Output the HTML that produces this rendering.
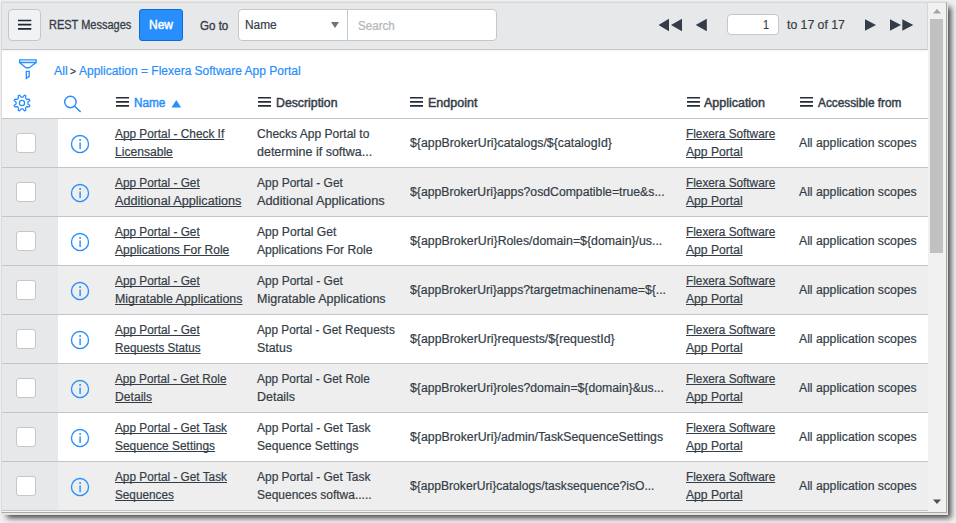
<!DOCTYPE html>
<html><head><meta charset="utf-8"><style>
*{margin:0;padding:0;box-sizing:border-box}
html,body{width:956px;height:523px;overflow:hidden;background:#f0f0f0;position:relative;
font-family:"Liberation Sans",sans-serif;font-size:12px;color:#343d47}
.t{position:absolute;white-space:pre;line-height:18px;transform-origin:0 0;text-decoration-skip-ink:none;-webkit-text-stroke:0.2px currentColor}
.outer{position:absolute;left:1px;top:1px;width:947px;height:514px;background:#e4e4e4;
 box-shadow:4.3px 4.3px 5.7px -1.7px rgba(0,0,0,0.7)}
.win{position:absolute;left:1px;top:2px;width:946px;height:511px;background:#f4f4f4;
 border-left:1px solid #dadada;border-top:1px solid #d6d8da;border-right:1px solid #a8a8a8;border-bottom:1px solid #aaaaaa}
.hdr{position:absolute;left:2px;top:3px;width:926px;height:47px;background:#e6e8ea;border-bottom:1px solid #c3c5c8;border-right:1px solid #d4d7da;box-shadow:0 1px 2px rgba(0,0,0,0.05)}
.hbtn{position:absolute;left:8px;top:9px;width:33px;height:32px;background:#f1f2f3;border:1px solid #c4c7ca;border-radius:4px}
.hbtn i{position:absolute;left:9px;width:14px;height:2px;background:#1e2832}
.newbtn{position:absolute;left:139px;top:9px;width:44px;height:32px;background:#278efc;border:1px solid #0c6cd8;border-radius:3px}
.sel{position:absolute;left:238px;top:9px;width:110px;height:32px;background:#fff;border:1px solid #c4c7ca;border-radius:4px 0 0 4px}
.selarrow{position:absolute;left:331px;top:22px;width:0;height:0;border-left:4px solid transparent;border-right:4px solid transparent;border-top:6px solid #6d747b}
.srch{position:absolute;left:347px;top:9px;width:150px;height:32px;background:#fff;border:1px solid #c4c7ca;border-radius:0 4px 4px 0}
.pg{position:absolute}
.pinp{position:absolute;left:727px;top:14px;width:52px;height:21px;background:#fff;border:1px solid #c4c7ca;border-radius:4px}
.hic{position:absolute;top:97px;width:13px;height:10px}
.hic i{position:absolute;left:0;width:13px;height:1.6px;background:#232c36}
.hline{position:absolute;left:2px;top:118px;width:926px;height:1px;background:#c4c7ca}
.body{position:absolute;left:2px;top:50px;width:926px;height:461px;background:#fff}
.row{position:absolute;left:2px;width:926px;height:48px}
.lcol{position:absolute;left:2px;width:56px;height:48px;background:#e6e8ea}
.rline{position:absolute;left:2px;width:926px;height:1px;background:#c3c6c9}
.cb{position:absolute;left:16px;width:20px;height:20px;background:#fff;border:1px solid #c4c6c9;border-radius:3px}
.info{position:absolute;left:69.6px}
.sb{position:absolute;left:928px;top:3px;width:18px;height:509px;background:#f1f1f1}
.thumb{position:absolute;left:930px;top:19px;width:13px;height:234px;background:#c1c1c1}
.frame{position:absolute;left:1px;top:1px;width:947px;height:513px;border:1px solid #d5d6d8;
 box-shadow:2px 3px 6px 1px rgba(0,0,0,0.45)}
</style></head>
<body>
<div class="outer"></div>
<div class="win"></div>
<div class="body"></div>
<div class="hdr"></div>
<div class="hbtn"></div>
<svg style="position:absolute;left:17px;top:16px" width="16" height="16" viewBox="0 0 16 16"><path d="M1 4.5 H14.3 M1 8.6 H14.3 M1 12.8 H14.3" stroke="#1e2832" stroke-width="1.7"/></svg>
<div class="t" style="transform:scaleX(0.9164);left:48.5px;top:15.600000000000001px;-webkit-text-stroke:0.3px currentColor;">REST Messages</div>
<div class="newbtn"></div>
<div class="t" style="transform:scaleX(0.9993);left:149px;top:16px;color:#fff;-webkit-text-stroke:0.45px #fff;">New</div>
<div class="t" style="transform:scaleX(0.9639);left:200.2px;top:17px;-webkit-text-stroke:0.35px currentColor;">Go to</div>
<div class="sel"></div>
<div class="t" style="transform:scaleX(0.9901);left:244.5px;top:16px;">Name</div>
<div class="selarrow"></div>
<div class="srch"></div>
<div class="t" style="transform:scaleX(0.9676);left:357.6px;top:16.6px;color:#b1b6bb;">Search</div>
<svg class="pg" style="left:656px;top:17px" width="30" height="16" viewBox="0 0 30 16"><path d="M2.5 8 L13 1.8 L13 14.2 Z M15 8 L26 1.8 L26 14.2 Z" fill="#343d47"/></svg>
<svg class="pg" style="left:694px;top:17px" width="16" height="16" viewBox="0 0 16 16"><path d="M1.7 8 L12.8 1.8 L12.8 14.2 Z" fill="#343d47"/></svg>
<div class="pinp"></div>
<div class="t" style="transform:scaleX(0.8972);left:762.7px;top:15.8px;">1</div>
<div class="t" style="transform:scaleX(1.0191);left:787px;top:15.899999999999999px;">to 17 of 17</div>
<svg class="pg" style="left:863px;top:17px" width="16" height="16" viewBox="0 0 16 16"><path d="M13 8 L2 2.2 L2 13.8 Z" fill="#343d47"/></svg>
<svg class="pg" style="left:888px;top:17px" width="30" height="16" viewBox="0 0 30 16"><path d="M13 8 L2 2.2 L2 13.8 Z M25.3 8 L14.3 2.2 L14.3 13.8 Z" fill="#343d47"/></svg>
<svg style="position:absolute;left:10px;top:54px" width="34" height="30" viewBox="0 0 34 30"><path d="M9.6 5.9 H26.1 V8.5 H9.6 Z" fill="none" stroke="#278efc" stroke-width="1.35" stroke-linejoin="miter"/><path d="M9.6 8.5 L15.9 13.7 H19.3 L26.1 8.5" fill="none" stroke="#278efc" stroke-width="1.35" stroke-linejoin="round"/><path d="M16.3 17.4 H19.2 V22.4 L16.3 24.4 Z" fill="none" stroke="#278efc" stroke-width="1.3" stroke-linejoin="miter"/></svg>
<div class="t" style="transform:scaleX(1.0267);left:54px;top:62px;color:#278efc;">All</div>
<div class="t" style="transform:scaleX(0.9771);left:69.8px;top:61.599999999999994px;font-size:10.5px;">&gt;</div>
<div class="t" style="transform:scaleX(0.9991);left:78.6px;top:62px;color:#278efc;">Application = Flexera Software App Portal</div>
<svg style="position:absolute;left:11.5px;top:93.2px" width="22" height="22" viewBox="0 0 22 22"><g fill="none" stroke="#278efc" stroke-width="1.25"><path d="M15.93 10.94 L17.84 12.41 L17.25 13.84 L14.85 13.53 L13.53 14.85 L13.84 17.25 L12.41 17.84 L10.94 15.93 L9.06 15.93 L7.59 17.84 L6.16 17.25 L6.47 14.85 L5.15 13.53 L2.75 13.84 L2.16 12.41 L4.07 10.94 L4.07 9.06 L2.16 7.59 L2.75 6.16 L5.15 6.47 L6.47 5.15 L6.16 2.75 L7.59 2.16 L9.06 4.07 L10.94 4.07 L12.41 2.16 L13.84 2.75 L13.53 5.15 L14.85 6.47 L17.25 6.16 L17.84 7.59 L15.93 9.06 Z" stroke-linejoin="round"/><circle cx="10" cy="10" r="2.6"/></g></svg>
<svg style="position:absolute;left:60px;top:92px" width="24" height="24" viewBox="0 0 24 24"><circle cx="10.4" cy="10" r="5.7" fill="none" stroke="#278efc" stroke-width="1.45"/><path d="M14.6 14.3 L20.2 19.5" stroke="#278efc" stroke-width="1.5" stroke-linecap="round"/></svg>
<svg style="position:absolute;left:116px;top:94px" width="14" height="14" viewBox="0 0 14 14"><path d="M0 3.8 H13 M0 7.9 H13 M0 11.9 H13" stroke="#232c36" stroke-width="1.6"/></svg>
<div class="t" style="transform:scaleX(0.9808);left:133.6px;top:93.8px;color:#278efc;-webkit-text-stroke:0.45px #278efc;">Name</div>
<svg style="position:absolute;left:170px;top:99px" width="13" height="10" viewBox="0 0 13 10"><path d="M1.5 8.5 L6.3 1 L11.1 8.5 Z" fill="#278efc"/></svg>
<svg style="position:absolute;left:257.5px;top:94px" width="14" height="14" viewBox="0 0 14 14"><path d="M0 3.8 H13 M0 7.9 H13 M0 11.9 H13" stroke="#232c36" stroke-width="1.6"/></svg>
<div class="t" style="transform:scaleX(1.0245);left:275.6px;top:93.8px;-webkit-text-stroke:0.45px #343d47;">Description</div>
<svg style="position:absolute;left:410px;top:94px" width="14" height="14" viewBox="0 0 14 14"><path d="M0 3.8 H13 M0 7.9 H13 M0 11.9 H13" stroke="#232c36" stroke-width="1.6"/></svg>
<div class="t" style="transform:scaleX(1.0427);left:427.8px;top:93.8px;-webkit-text-stroke:0.45px #343d47;">Endpoint</div>
<svg style="position:absolute;left:686.8px;top:94px" width="14" height="14" viewBox="0 0 14 14"><path d="M0 3.8 H13 M0 7.9 H13 M0 11.9 H13" stroke="#232c36" stroke-width="1.6"/></svg>
<div class="t" style="transform:scaleX(1.0389);left:704.4px;top:93.8px;-webkit-text-stroke:0.45px #343d47;">Application</div>
<div class="t" style="transform:scaleX(0.9846);left:817.6px;top:93.8px;-webkit-text-stroke:0.45px #343d47;">Accessible from</div>
<svg style="position:absolute;left:800px;top:94px" width="14" height="14" viewBox="0 0 14 14"><path d="M0 3.8 H13 M0 7.9 H13 M0 11.9 H13" stroke="#232c36" stroke-width="1.6"/></svg>
<div class="hline"></div>
<div class="row" style="top:119px;background:#ffffff"></div>
<div class="lcol" style="top:119px"></div>
<div class="cb" style="top:133px"></div>
<svg class="info" style="top:134px" width="20" height="20" viewBox="0 0 20 20"><circle cx="10" cy="10" r="8.55" fill="none" stroke="#278efc" stroke-width="1.35"/><circle cx="10.1" cy="6.0" r="0.95" fill="#278efc"/><path d="M10.1 8.9 V14.6" stroke="#278efc" stroke-width="1.45" stroke-linecap="round"/></svg>
<div class="t" style="transform:scaleX(0.9863);left:115px;top:124.6px;text-decoration:underline;">App Portal - Check If</div>
<div class="t" style="transform:scaleX(1.0074);left:115px;top:143px;text-decoration:underline;">Licensable</div>
<div class="t" style="transform:scaleX(1.0030);left:256.6px;top:124.6px;">Checks App Portal to</div>
<div class="t" style="transform:scaleX(1.0396);left:256.6px;top:143px;">determine if softwa...</div>
<div class="t" style="transform:scaleX(1.0258);left:409.7px;top:134px;">${appBrokerUri}catalogs/${catalogId}</div>
<div class="t" style="transform:scaleX(0.9834);left:686.3px;top:124.6px;text-decoration:underline;">Flexera Software</div>
<div class="t" style="transform:scaleX(1.0099);left:686.3px;top:143px;text-decoration:underline;">App Portal</div>
<div class="t" style="transform:scaleX(1.0190);left:799.2px;top:134px;">All application scopes</div>
<div class="rline" style="top:167px"></div>
<div class="row" style="top:168px;background:#eeeeee"></div>
<div class="lcol" style="top:168px"></div>
<div class="cb" style="top:182px"></div>
<svg class="info" style="top:183px" width="20" height="20" viewBox="0 0 20 20"><circle cx="10" cy="10" r="8.55" fill="none" stroke="#278efc" stroke-width="1.35"/><circle cx="10.1" cy="6.0" r="0.95" fill="#278efc"/><path d="M10.1 8.9 V14.6" stroke="#278efc" stroke-width="1.45" stroke-linecap="round"/></svg>
<div class="t" style="transform:scaleX(0.9843);left:115px;top:173.6px;text-decoration:underline;">App Portal - Get</div>
<div class="t" style="transform:scaleX(1.0525);left:115px;top:192px;text-decoration:underline;">Additional Applications</div>
<div class="t" style="transform:scaleX(0.9983);left:256.6px;top:173.6px;">App Portal - Get</div>
<div class="t" style="transform:scaleX(1.0633);left:256.6px;top:192px;">Additional Applications</div>
<div class="t" style="transform:scaleX(1.0191);left:409.7px;top:183px;">${appBrokerUri}apps?osdCompatible=true&amp;s...</div>
<div class="t" style="transform:scaleX(0.9834);left:686.3px;top:173.6px;text-decoration:underline;">Flexera Software</div>
<div class="t" style="transform:scaleX(1.0099);left:686.3px;top:192px;text-decoration:underline;">App Portal</div>
<div class="t" style="transform:scaleX(1.0190);left:799.2px;top:183px;">All application scopes</div>
<div class="rline" style="top:216px"></div>
<div class="row" style="top:217px;background:#ffffff"></div>
<div class="lcol" style="top:217px"></div>
<div class="cb" style="top:231px"></div>
<svg class="info" style="top:232px" width="20" height="20" viewBox="0 0 20 20"><circle cx="10" cy="10" r="8.55" fill="none" stroke="#278efc" stroke-width="1.35"/><circle cx="10.1" cy="6.0" r="0.95" fill="#278efc"/><path d="M10.1 8.9 V14.6" stroke="#278efc" stroke-width="1.45" stroke-linecap="round"/></svg>
<div class="t" style="transform:scaleX(0.9843);left:115px;top:222.6px;text-decoration:underline;">App Portal - Get</div>
<div class="t" style="transform:scaleX(1.0021);left:115px;top:241px;text-decoration:underline;">Applications For Role</div>
<div class="t" style="transform:scaleX(1.0074);left:256.6px;top:222.6px;">App Portal Get</div>
<div class="t" style="transform:scaleX(1.0126);left:256.6px;top:241px;">Applications For Role</div>
<div class="t" style="transform:scaleX(1.0263);left:409.7px;top:232px;">${appBrokerUri}Roles/domain=${domain}/us...</div>
<div class="t" style="transform:scaleX(0.9834);left:686.3px;top:222.6px;text-decoration:underline;">Flexera Software</div>
<div class="t" style="transform:scaleX(1.0099);left:686.3px;top:241px;text-decoration:underline;">App Portal</div>
<div class="t" style="transform:scaleX(1.0190);left:799.2px;top:232px;">All application scopes</div>
<div class="rline" style="top:265px"></div>
<div class="row" style="top:266px;background:#eeeeee"></div>
<div class="lcol" style="top:266px"></div>
<div class="cb" style="top:280px"></div>
<svg class="info" style="top:281px" width="20" height="20" viewBox="0 0 20 20"><circle cx="10" cy="10" r="8.55" fill="none" stroke="#278efc" stroke-width="1.35"/><circle cx="10.1" cy="6.0" r="0.95" fill="#278efc"/><path d="M10.1 8.9 V14.6" stroke="#278efc" stroke-width="1.45" stroke-linecap="round"/></svg>
<div class="t" style="transform:scaleX(0.9843);left:115px;top:271.6px;text-decoration:underline;">App Portal - Get</div>
<div class="t" style="transform:scaleX(1.0324);left:115px;top:290px;text-decoration:underline;">Migratable Applications</div>
<div class="t" style="transform:scaleX(0.9983);left:256.6px;top:271.6px;">App Portal - Get</div>
<div class="t" style="transform:scaleX(1.0421);left:256.6px;top:290px;">Migratable Applications</div>
<div class="t" style="transform:scaleX(1.0165);left:409.7px;top:281px;">${appBrokerUri}apps?targetmachinename=${...</div>
<div class="t" style="transform:scaleX(0.9834);left:686.3px;top:271.6px;text-decoration:underline;">Flexera Software</div>
<div class="t" style="transform:scaleX(1.0099);left:686.3px;top:290px;text-decoration:underline;">App Portal</div>
<div class="t" style="transform:scaleX(1.0190);left:799.2px;top:281px;">All application scopes</div>
<div class="rline" style="top:314px"></div>
<div class="row" style="top:315px;background:#ffffff"></div>
<div class="lcol" style="top:315px"></div>
<div class="cb" style="top:329px"></div>
<svg class="info" style="top:330px" width="20" height="20" viewBox="0 0 20 20"><circle cx="10" cy="10" r="8.55" fill="none" stroke="#278efc" stroke-width="1.35"/><circle cx="10.1" cy="6.0" r="0.95" fill="#278efc"/><path d="M10.1 8.9 V14.6" stroke="#278efc" stroke-width="1.45" stroke-linecap="round"/></svg>
<div class="t" style="transform:scaleX(0.9843);left:115px;top:320.6px;text-decoration:underline;">App Portal - Get</div>
<div class="t" style="transform:scaleX(0.9720);left:115px;top:339px;text-decoration:underline;">Requests Status</div>
<div class="t" style="transform:scaleX(0.9837);left:256.6px;top:320.6px;">App Portal - Get Requests</div>
<div class="t" style="transform:scaleX(1.0314);left:256.6px;top:339px;">Status</div>
<div class="t" style="transform:scaleX(1.0257);left:409.7px;top:330px;">${appBrokerUri}requests/${requestId}</div>
<div class="t" style="transform:scaleX(0.9834);left:686.3px;top:320.6px;text-decoration:underline;">Flexera Software</div>
<div class="t" style="transform:scaleX(1.0099);left:686.3px;top:339px;text-decoration:underline;">App Portal</div>
<div class="t" style="transform:scaleX(1.0190);left:799.2px;top:330px;">All application scopes</div>
<div class="rline" style="top:363px"></div>
<div class="row" style="top:364px;background:#eeeeee"></div>
<div class="lcol" style="top:364px"></div>
<div class="cb" style="top:378px"></div>
<svg class="info" style="top:379px" width="20" height="20" viewBox="0 0 20 20"><circle cx="10" cy="10" r="8.55" fill="none" stroke="#278efc" stroke-width="1.35"/><circle cx="10.1" cy="6.0" r="0.95" fill="#278efc"/><path d="M10.1 8.9 V14.6" stroke="#278efc" stroke-width="1.45" stroke-linecap="round"/></svg>
<div class="t" style="transform:scaleX(0.9767);left:115px;top:369.6px;text-decoration:underline;">App Portal - Get Role</div>
<div class="t" style="transform:scaleX(1.0112);left:115px;top:388px;text-decoration:underline;">Details</div>
<div class="t" style="transform:scaleX(0.9889);left:256.6px;top:369.6px;">App Portal - Get Role</div>
<div class="t" style="transform:scaleX(1.0385);left:256.6px;top:388px;">Details</div>
<div class="t" style="transform:scaleX(1.0190);left:409.7px;top:379px;">${appBrokerUri}roles?domain=${domain}&amp;us...</div>
<div class="t" style="transform:scaleX(0.9834);left:686.3px;top:369.6px;text-decoration:underline;">Flexera Software</div>
<div class="t" style="transform:scaleX(1.0099);left:686.3px;top:388px;text-decoration:underline;">App Portal</div>
<div class="t" style="transform:scaleX(1.0190);left:799.2px;top:379px;">All application scopes</div>
<div class="rline" style="top:412px"></div>
<div class="row" style="top:413px;background:#ffffff"></div>
<div class="lcol" style="top:413px"></div>
<div class="cb" style="top:427px"></div>
<svg class="info" style="top:428px" width="20" height="20" viewBox="0 0 20 20"><circle cx="10" cy="10" r="8.55" fill="none" stroke="#278efc" stroke-width="1.35"/><circle cx="10.1" cy="6.0" r="0.95" fill="#278efc"/><path d="M10.1 8.9 V14.6" stroke="#278efc" stroke-width="1.45" stroke-linecap="round"/></svg>
<div class="t" style="transform:scaleX(0.9838);left:115px;top:418.6px;text-decoration:underline;">App Portal - Get Task</div>
<div class="t" style="transform:scaleX(0.9935);left:115px;top:437px;text-decoration:underline;">Sequence Settings</div>
<div class="t" style="transform:scaleX(0.9970);left:256.6px;top:418.6px;">App Portal - Get Task</div>
<div class="t" style="transform:scaleX(1.0084);left:256.6px;top:437px;">Sequence Settings</div>
<div class="t" style="transform:scaleX(1.0254);left:409.7px;top:428px;">${appBrokerUri}/admin/TaskSequenceSettings</div>
<div class="t" style="transform:scaleX(0.9834);left:686.3px;top:418.6px;text-decoration:underline;">Flexera Software</div>
<div class="t" style="transform:scaleX(1.0099);left:686.3px;top:437px;text-decoration:underline;">App Portal</div>
<div class="t" style="transform:scaleX(1.0190);left:799.2px;top:428px;">All application scopes</div>
<div class="rline" style="top:461px"></div>
<div class="row" style="top:462px;background:#eeeeee"></div>
<div class="lcol" style="top:462px"></div>
<div class="cb" style="top:476px"></div>
<svg class="info" style="top:477px" width="20" height="20" viewBox="0 0 20 20"><circle cx="10" cy="10" r="8.55" fill="none" stroke="#278efc" stroke-width="1.35"/><circle cx="10.1" cy="6.0" r="0.95" fill="#278efc"/><path d="M10.1 8.9 V14.6" stroke="#278efc" stroke-width="1.45" stroke-linecap="round"/></svg>
<div class="t" style="transform:scaleX(0.9838);left:115px;top:467.6px;text-decoration:underline;">App Portal - Get Task</div>
<div class="t" style="transform:scaleX(0.9792);left:115px;top:486px;text-decoration:underline;">Sequences</div>
<div class="t" style="transform:scaleX(0.9970);left:256.6px;top:467.6px;">App Portal - Get Task</div>
<div class="t" style="transform:scaleX(0.9988);left:256.6px;top:486px;">Sequences softwa.....</div>
<div class="t" style="transform:scaleX(1.0097);left:409.7px;top:477px;">${appBrokerUri}catalogs/tasksequence?isO...</div>
<div class="t" style="transform:scaleX(0.9834);left:686.3px;top:467.6px;text-decoration:underline;">Flexera Software</div>
<div class="t" style="transform:scaleX(1.0099);left:686.3px;top:486px;text-decoration:underline;">App Portal</div>
<div class="t" style="transform:scaleX(1.0190);left:799.2px;top:477px;">All application scopes</div>
<div class="rline" style="top:510px"></div>
<div class="sb"></div>
<div class="thumb"></div>
<svg style="position:absolute;left:932px;top:8px" width="10" height="6" viewBox="0 0 10 6"><path d="M1 5.5 L5 1 L9 5.5 Z" fill="#a3a3a3"/></svg>
<svg style="position:absolute;left:932px;top:499px" width="10" height="6" viewBox="0 0 10 6"><path d="M1 0.5 L5 5 L9 0.5 Z" fill="#505050"/></svg>
</body></html>
